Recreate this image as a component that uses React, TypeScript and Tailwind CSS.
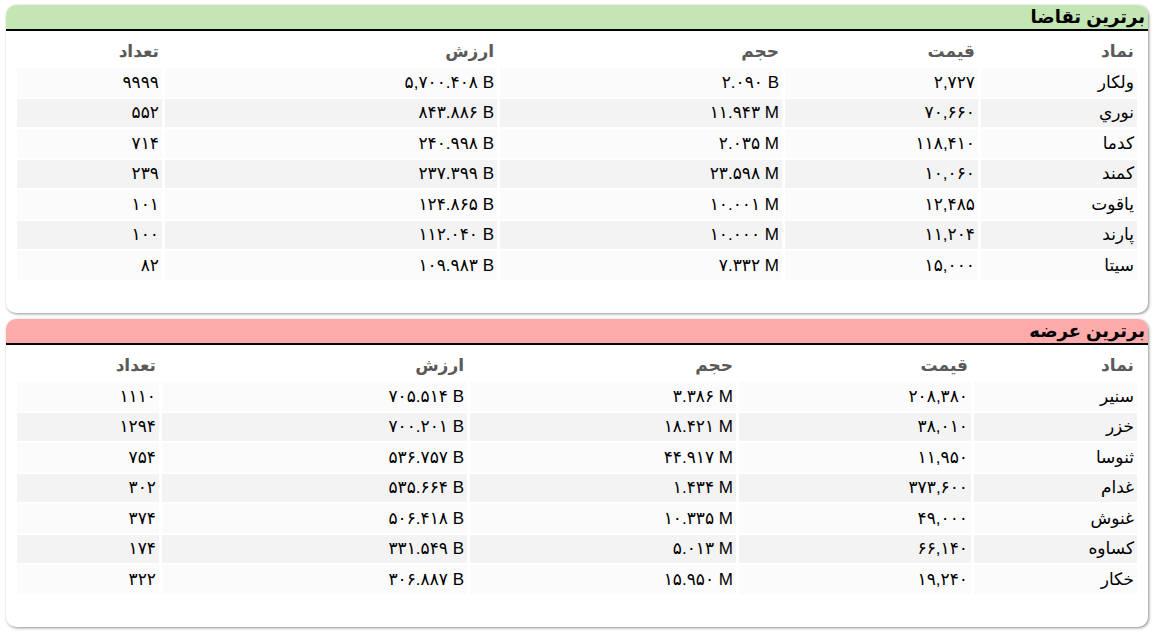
import React from 'react';

type Row = [string, string, string, string, string];

const demandRows: Row[] = [
    ['ولکار', '۲,۷۲۷', '۲.۰۹۰ B', '۵,۷۰۰.۴۰۸ B', '۹۹۹۹'],
    ['نوري', '۷۰,۶۶۰', '۱۱.۹۴۳ M', '۸۴۳.۸۸۶ B', '۵۵۲'],
    ['کدما', '۱۱۸,۴۱۰', '۲.۰۳۵ M', '۲۴۰.۹۹۸ B', '۷۱۴'],
    ['کمند', '۱۰,۰۶۰', '۲۳.۵۹۸ M', '۲۳۷.۳۹۹ B', '۲۳۹'],
    ['یاقوت', '۱۲,۴۸۵', '۱۰.۰۰۱ M', '۱۲۴.۸۶۵ B', '۱۰۱'],
    ['پارند', '۱۱,۲۰۴', '۱۰.۰۰۰ M', '۱۱۲.۰۴۰ B', '۱۰۰'],
    ['سیتا', '۱۵,۰۰۰', '۷.۳۳۲ M', '۱۰۹.۹۸۳ B', '۸۲'],
];

const supplyRows: Row[] = [
    ['سنیر', '۲۰۸,۳۸۰', '۳.۳۸۶ M', '۷۰۵.۵۱۴ B', '۱۱۱۰'],
    ['خزر', '۳۸,۰۱۰', '۱۸.۴۲۱ M', '۷۰۰.۲۰۱ B', '۱۲۹۴'],
    ['ثنوسا', '۱۱,۹۵۰', '۴۴.۹۱۷ M', '۵۳۶.۷۵۷ B', '۷۵۴'],
    ['غدام', '۳۷۳,۶۰۰', '۱.۴۳۴ M', '۵۳۵.۶۶۴ B', '۳۰۲'],
    ['غنوش', '۴۹,۰۰۰', '۱۰.۳۳۵ M', '۵۰۶.۴۱۸ B', '۳۷۴'],
    ['کساوه', '۶۶,۱۴۰', '۵.۰۱۳ M', '۳۳۱.۵۴۹ B', '۱۷۴'],
    ['خکار', '۱۹,۲۴۰', '۱۵.۹۵۰ M', '۳۰۶.۸۸۷ B', '۳۲۲'],
];

const headers = ['نماد', 'قیمت', 'حجم', 'ارزش', 'تعداد'];

/**
 * One ranking card: coloured title bar and a five column table
 */
const RankCard: React.FC<{ title: string; barClass: string; widths: number[]; rows: Row[] }> = ({
    title,
    barClass,
    widths,
    rows,
}) => (
    <section className="h-[308px] w-[1142px] rounded-[10px] bg-white shadow-[1px_1px_3px_rgba(0,0,0,0.45)] overflow-hidden">
        {/* Title bar */}
        <div className={`h-[26px] border-b-2 border-black px-[3px] flex items-center ${barClass}`}>
            <h2 className="text-[18px] font-bold leading-none text-black">{title}</h2>
        </div>

        <div className="px-[8px] pt-[4px]">
            <table className="w-full table-fixed border-separate border-spacing-x-[3px] border-spacing-y-[2px] text-[17px]">
                <colgroup>
                    {widths.map((w, i) => (
                        <col key={i} style={{ width: w }} />
                    ))}
                </colgroup>
                <thead>
                    <tr>
                        {headers.map((h) => (
                            <th key={h} className="h-[29px] pr-[3px] text-right font-bold text-[#5a5a5a] bg-white">
                                {h}
                            </th>
                        ))}
                    </tr>
                </thead>
                <tbody>
                    {rows.map((r, ri) => (
                        <tr key={r[0]} className={ri % 2 === 0 ? 'bg-[#fbfbfb]' : 'bg-[#f3f3f3]'}>
                            {r.map((cell, ci) => (
                                <td key={ci} className="h-[28.5px] pr-[3px] text-right text-black leading-none">
                                    {ci === 0 ? cell : <span dir="ltr">{cell}</span>}
                                </td>
                            ))}
                        </tr>
                    ))}
                </tbody>
            </table>
        </div>
    </section>
);

export default function App() {
    return (
        <div
            dir="rtl"
            className="w-[1156px] h-[635px] bg-white pt-[5px] pr-[8px] flex flex-col gap-[6px]"
            style={{ fontFamily: '"Liberation Sans", "DejaVu Sans", sans-serif' }}
        >
            <RankCard title="برترین تقاضا" barClass="bg-[#c3e6b4]" widths={[156, 193, 282, 332, 145]} rows={demandRows} />
            <RankCard title="برترین عرضه" barClass="bg-[#fdaaaa]" widths={[163, 232, 266, 305, 142]} rows={supplyRows} />
        </div>
    );
}
